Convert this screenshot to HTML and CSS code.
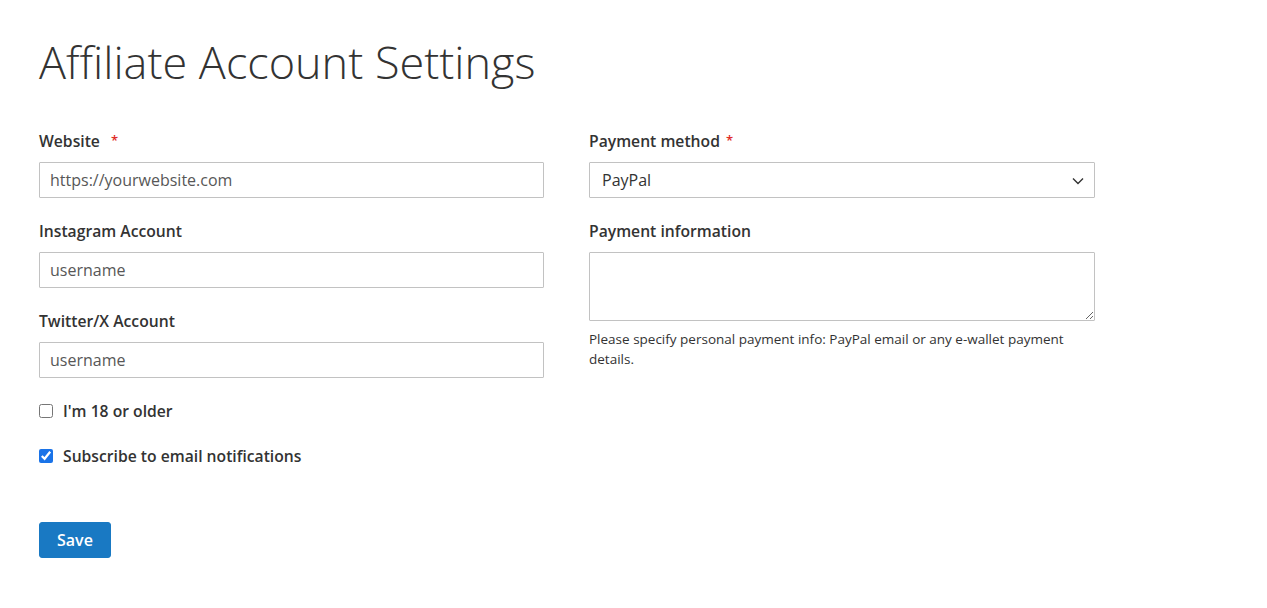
FILE: index.html
```html
<!DOCTYPE html>
<html lang="en">
<head>
<meta charset="utf-8">
<title>Affiliate Account Settings</title>
<link rel="stylesheet" href="styles.css">
</head>
<body>
<main class="page">
  <h1 class="title">Affiliate Account Settings</h1>
  <form class="form">
    <div class="grid">
      <div class="col">
        <div class="field">
          <label class="label">Website <span class="req req-spaced">*</span></label>
          <input class="input" type="text" placeholder="https://yourwebsite.com">
        </div>
        <div class="field">
          <label class="label">Instagram Account</label>
          <input class="input" type="text" placeholder="username">
        </div>
        <div class="field">
          <label class="label">Twitter/X Account</label>
          <input class="input" type="text" placeholder="username">
        </div>
        <label class="check"><input type="checkbox" class="cb"><span>I'm 18 or older</span></label>
        <label class="check"><input type="checkbox" class="cb" checked><span>Subscribe to email notifications</span></label>
      </div>
      <div class="col">
        <div class="field">
          <label class="label">Payment method <span class="req">*</span></label>
          <div class="select-wrap">
            <select class="input select">
              <option>PayPal</option>
            </select>
            <svg class="chev" width="12" height="8" viewBox="0 0 12 8"><path d="M1 1.5 L6 6.5 L11 1.5" fill="none" stroke="#333" stroke-width="1.4"/></svg>
          </div>
        </div>
        <div class="field">
          <label class="label">Payment information</label>
          <textarea class="input textarea"></textarea>
          <p class="note">Please specify personal payment info: PayPal email or any e-wallet payment details.</p>
        </div>
      </div>
    </div>
    <button type="button" class="btn">Save</button>
  </form>
</main>
</body>
</html>
```
FILE: styles.css
```css
* { box-sizing: border-box; }
html, body { margin: 0; padding: 0; background: #fff; }
body {
  font-family: "Open Sans", "Liberation Sans", sans-serif;
  color: #333;
}
.page { padding: 34px 39px 40px; }
.title {
  margin: 0 0 41px;
  font-size: 45px;
  font-weight: 300;
  line-height: 55px;
  color: #333;
}
.grid {
  display: grid;
  grid-template-columns: 505px 506px;
  column-gap: 45px;
}
.field { margin-bottom: 22px; }
.label {
  display: block;
  font-size: 15.7px;
  font-weight: 600;
  line-height: 22px;
  margin-bottom: 10px;
}
.req { color: #e02b27; font-size: 13px; font-weight: 600; vertical-align: top; line-height: 20px; margin-left: 2px; }
.req-spaced { margin-left: 7px; }
.input {
  display: block;
  width: 100%;
  height: 36px;
  border: 1px solid #c2c2c2;
  border-radius: 1px;
  background: #fff;
  padding: 0 10px;
  font-family: "Open Sans", "Liberation Sans", sans-serif;
  font-size: 16px;
  color: #333;
  outline: none;
}
.input::placeholder { color: #575757; }
.select-wrap { position: relative; }
.select { appearance: none; -webkit-appearance: none; padding-left: 12px; }
.chev { position: absolute; right: 11px; top: 15px; pointer-events: none; }
.textarea { height: 69px; padding: 8px 10px; resize: vertical; }
.note {
  margin: 8px 0 0;
  font-size: 13.5px;
  line-height: 20px;
  color: #333;
}
.check {
  display: flex;
  align-items: center;
  gap: 10px;
  font-size: 15.7px;
  font-weight: 600;
  line-height: 22px;
  margin-bottom: 23px;
}
.cb { margin: 0; width: 14px; height: 14px; accent-color: #1a73e8; }
.btn {
  margin-top: 32px;
  height: 36px;
  padding: 0 17px;
  background: #1979c3;
  border: 1px solid #1979c3;
  border-radius: 3px;
  color: #fff;
  font-family: "Open Sans", "Liberation Sans", sans-serif;
  font-size: 16px;
  font-weight: 600;
  cursor: pointer;
}
```
